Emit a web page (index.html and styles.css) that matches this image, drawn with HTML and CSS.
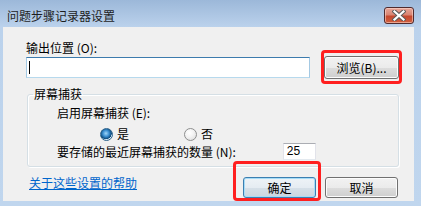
FILE: index.html
```html
<!DOCTYPE html>
<html lang="zh-CN">
<head>
<meta charset="utf-8">
<title>问题步骤记录器设置</title>
<link rel="stylesheet" href="styles.css">
</head>
<body>
<div class="window">
  <div class="titlebar">
    <span class="title">问题步骤记录器设置</span>
    <span class="close">
      <svg width="14" height="11" viewBox="0 0 14 11">
        <path d="M2.5 1.5 L11.5 9.5 M11.5 1.5 L2.5 9.5" stroke="#5a5a5a" stroke-width="4.2" stroke-linecap="square" fill="none"/>
        <path d="M2.5 1.5 L11.5 9.5 M11.5 1.5 L2.5 9.5" stroke="#ffffff" stroke-width="2.2" stroke-linecap="square" fill="none"/>
      </svg>
    </span>
  </div>
  <div class="client">
    <div class="out-label">输出位置 (O):</div>
    <div class="out-row">
      <div class="textbox focused"><span class="caret"></span></div>
      <button class="btn browse">浏览(B)...</button>
    </div>
    <fieldset class="group">
      <legend>屏幕捕获</legend>
      <div class="group-body">
        <div class="line">启用屏幕捕获 (E):</div>
        <div class="radios">
          <span class="radio-item"><span class="radio checked"></span>是</span>
          <span class="radio-item second"><span class="radio"></span>否</span>
        </div>
        <div class="count-row">
          <span>要存储的最近屏幕捕获的数量 (N):</span>
          <div class="textbox small">25</div>
        </div>
      </div>
    </fieldset>
    <div class="bottom-row">
      <a class="help" href="#">关于这些设置的帮助</a>
      <button class="btn ok">确定</button>
      <button class="btn cancel">取消</button>
    </div>
    <div class="mark mark-browse"></div>
    <div class="mark mark-ok"></div>
  </div>
</div>
</body>
</html>
```
FILE: styles.css
```css
html, body {
  margin: 0;
  padding: 0;
}
body {
  width: 421px;
  height: 206px;
  overflow: hidden;
  background: #bdd4ee;
  font-family: "Noto Sans CJK SC", "Noto Sans", sans-serif;
  font-size: 12px;
  color: #000;
}
.window {
  display: flex;
  flex-direction: column;
  height: 206px;
  background: linear-gradient(#9cb8d9 0px, #b3cbe7 20px, #bbd2ec 27px, #c0d6ee 100%);
}
.titlebar {
  height: 27px;
  display: flex;
  align-items: flex-start;
  justify-content: space-between;
  padding: 0 7px;
}
.title {
  padding-top: 8px;
  line-height: 16px;
  color: #1e1e1e;
}
.close {
  box-sizing: border-box;
  margin-top: 7px;
  width: 30px;
  height: 17px;
  border: 1px solid #4f2b2e;
  border-radius: 3px;
  background: linear-gradient(#e7a699 0%, #d98573 45%, #c5482f 55%, #d0603f 100%);
  box-shadow: inset 0 0 0 1px rgba(255, 220, 210, 0.55);
  display: flex;
  align-items: center;
  justify-content: center;
}
.client {
  flex: 1;
  margin: 0 7px 5px 3px;
  background: #f0f0f0;
  position: relative;
}
.out-label {
  margin-left: 23px;
  padding-top: 13px;
  line-height: 16px;
}
.out-row {
  display: flex;
  align-items: center;
  margin-top: 1px;
  margin-left: 23px;
  height: 21px;
}
.textbox {
  box-sizing: border-box;
  background: #fff;
  border: 1px solid;
  border-color: #abadb3 #e2e3ea #e3e9ef #e2e3ea;
}
.textbox.focused {
  width: 284px;
  height: 21px;
  border-color: #3d7bad #a4c9e3 #b7d9ed #a4c9e3;
  padding: 3px 2px;
}
.caret {
  display: block;
  width: 1px;
  height: 13px;
  background: #000;
}
.btn {
  box-sizing: border-box;
  font-family: "Noto Sans CJK SC", "Noto Sans", sans-serif;
  font-size: 12px;
  color: #000;
  padding: 0;
  border: 1px solid #707070;
  border-radius: 3px;
  background: linear-gradient(#f2f2f2 0%, #ebebeb 50%, #dddddd 50%, #cfcfcf 100%);
  box-shadow: inset 0 0 0 1px #fcfcfc;
  line-height: 16px;
}
.browse {
  margin-left: 14px;
  width: 75px;
  height: 23px;
}
.group {
  box-sizing: border-box;
  margin: 9px 0 0 24px;
  width: 372px;
  padding: 0;
  border: 1px solid #d5dfe5;
  border-radius: 3px;
  box-shadow: inset 1px 1px 0 #fff, 1px 1px 0 #fff;
  min-inline-size: 0;
}
.group legend {
  margin-left: 5px;
  padding: 0 1px;
  line-height: 14px;
}
.group-body {
  padding: 4px 0 6px 29px;
}
.line {
  line-height: 16px;
}
.radios {
  display: flex;
  align-items: center;
  height: 16px;
  margin-top: 5px;
  margin-left: 43px;
}
.radio-item {
  display: flex;
  align-items: center;
  gap: 4px;
  line-height: 16px;
}
.radio-item.second {
  margin-left: 55px;
}
.radio {
  box-sizing: border-box;
  width: 13px;
  height: 13px;
  border-radius: 50%;
  border: 1px solid #8e8f8f;
  background: radial-gradient(circle at 40% 35%, #ffffff 0%, #f4f4f4 40%, #d9d9d9 100%);
}
.radio.checked {
  border-color: #2c628b;
  background:
    radial-gradient(circle at 45% 40%, #9fd6f8 0%, #3a8ed0 35%, #0d4a7a 62%, transparent 66%),
    radial-gradient(circle, #e6f2fa 0%, #cfe3f3 100%);
}
.count-row {
  display: flex;
  align-items: center;
  margin-top: 1px;
  height: 17px;
}
.textbox.small {
  width: 33px;
  height: 17px;
  margin-left: 47px;
  padding: 0 3px;
  line-height: 15px;
  font-family: "Liberation Sans", sans-serif;
  font-size: 12px;
}
.bottom-row {
  display: flex;
  align-items: flex-start;
  margin-top: 8px;
  padding-left: 26px;
}
.help {
  color: #0066cc;
  text-decoration: underline;
  line-height: 16px;
}
.ok {
  margin-left: auto;
  margin-top: 2px;
  width: 73px;
  height: 21px;
  border-color: #3c7fb1;
  background: linear-gradient(#eef3f7 0%, #e5ecf2 50%, #d6e0e8 50%, #cbd6df 100%);
  box-shadow: inset 0 0 0 1px #a6dcf7;
}
.cancel {
  margin-left: 9px;
  margin-right: 16px;
  margin-top: 2px;
  width: 73px;
  height: 21px;
}
.mark {
  position: absolute;
  box-sizing: border-box;
  border: 3px solid #ff1f1f;
  border-radius: 4px;
}
.mark-browse {
  left: 318px;
  top: 23px;
  width: 81px;
  height: 34px;
}
.mark-ok {
  left: 230px;
  top: 134px;
  width: 88px;
  height: 40px;
}
```
